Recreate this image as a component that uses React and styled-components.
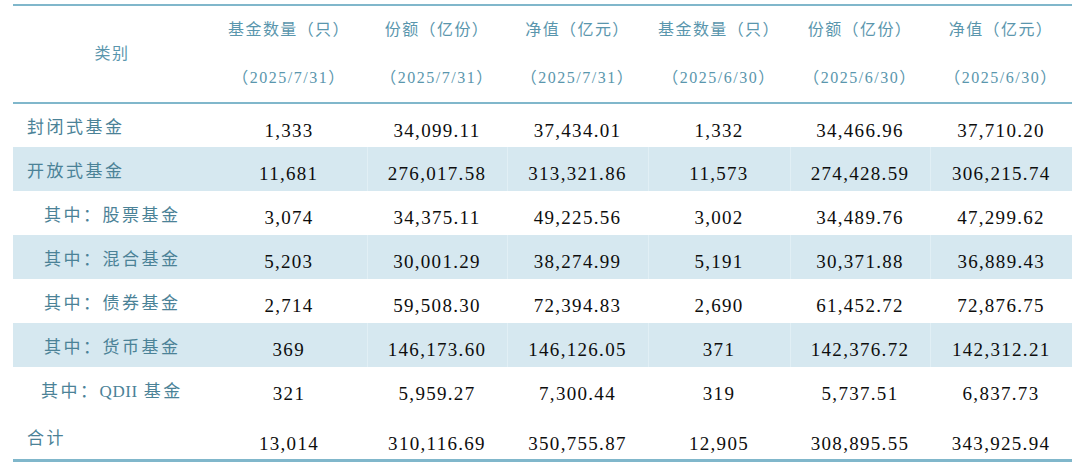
import React from 'react';
import styled, { createGlobalStyle } from 'styled-components';

const Global = createGlobalStyle`
  body {
    margin: 0;
    background: #fff;
  }
`;

const LINE = '#80b7cb';

const Table = styled.table`
  border-collapse: collapse;
  table-layout: fixed;
  width: 1059px;
  margin: 4px 0 0 13px;
  border-top: 2px solid ${LINE};
  border-bottom: 3px solid ${LINE};
`;

const HeadCell = styled.th`
  height: 96px;
  padding: 0;
  font-weight: normal;
  text-align: center;
  vertical-align: middle;
  color: #5a96ad;
  font-family: "Liberation Serif", "Noto Sans CJK SC", serif;
  border-bottom: 2px solid ${LINE};
`;

const HeadTitle = styled.span`
  display: block;
  line-height: 48px;
  font-size: 16px;
  letter-spacing: 1.4px;
`;

const HeadDate = styled.span`
  display: block;
  line-height: 48px;
  font-size: 16px;
  letter-spacing: 1.5px;
`;

const Row = styled.tr`
  height: ${p => (p.$tall ? 49 : 44)}px;
  background: ${p => (p.$shaded ? '#d6e8f0' : 'transparent')};
`;

const Label = styled.td`
  padding: ${p => (p.$tall ? '4px' : '0')} 0 0 ${p => p.$indent}px;
  font-family: "Liberation Serif", "Noto Sans CJK SC", serif;
  font-size: 17px;
  letter-spacing: 2.5px;
  color: #4b8297;
  white-space: nowrap;
  vertical-align: middle;
`;

const Latin = styled.span`
  letter-spacing: 0.6px;
  margin-right: 6px;
`;

const Num = styled.td`
  padding: ${p => (p.$tall ? 18 : 10)}px 0 0;
  text-align: center;
  vertical-align: middle;
  font-family: "Liberation Serif", serif;
  font-size: 19px;
  letter-spacing: 1.3px;
  color: #0d0d0d;
  border-left: ${p => (p.$shaded ? '1px solid #e1eff5' : 'none')};
`;

const widths = [198, 156, 140, 141, 142, 140, 142];

const heads = [
  ['基金数量（只）', '（2025/7/31）'],
  ['份额（亿份）', '（2025/7/31）'],
  ['净值（亿元）', '（2025/7/31）'],
  ['基金数量（只）', '（2025/6/30）'],
  ['份额（亿份）', '（2025/6/30）'],
  ['净值（亿元）', '（2025/6/30）'],
];

const rows = [
  { label: '封闭式基金', indent: 14, values: ['1,333', '34,099.11', '37,434.01', '1,332', '34,466.96', '37,710.20'] },
  { label: '开放式基金', indent: 14, shaded: true, values: ['11,681', '276,017.58', '313,321.86', '11,573', '274,428.59', '306,215.74'] },
  { label: '其中：股票基金', indent: 31, values: ['3,074', '34,375.11', '49,225.56', '3,002', '34,489.76', '47,299.62'] },
  { label: '其中：混合基金', indent: 31, shaded: true, values: ['5,203', '30,001.29', '38,274.99', '5,191', '30,371.88', '36,889.43'] },
  { label: '其中：债券基金', indent: 31, values: ['2,714', '59,508.30', '72,394.83', '2,690', '61,452.72', '72,876.75'] },
  { label: '其中：货币基金', indent: 31, shaded: true, values: ['369', '146,173.60', '146,126.05', '371', '142,376.72', '142,312.21'] },
  { label: ['其中：', 'QDII', '基金'], indent: 28, values: ['321', '5,959.27', '7,300.44', '319', '5,737.51', '6,837.73'] },
  { label: '合计', indent: 14, tall: true, values: ['13,014', '310,116.69', '350,755.87', '12,905', '308,895.55', '343,925.94'] },
];

export default function App() {
  return (
    <>
      <Global />
      <Table>
        <colgroup>
          {widths.map((w, i) => (
            <col key={i} style={{ width: w }} />
          ))}
        </colgroup>
        <thead>
          <tr>
            <HeadCell>
              <HeadTitle>类别</HeadTitle>
            </HeadCell>
            {heads.map(([title, date], i) => (
              <HeadCell key={i}>
                <HeadTitle>{title}</HeadTitle>
                <HeadDate>{date}</HeadDate>
              </HeadCell>
            ))}
          </tr>
        </thead>
        <tbody>
          {rows.map((r, idx) => (
            <Row key={idx} $shaded={r.shaded} $tall={r.tall}>
              <Label $indent={r.indent} $tall={r.tall}>
                {Array.isArray(r.label) ? (
                  <>
                    {r.label[0]}
                    <Latin>{r.label[1]}</Latin>
                    {r.label[2]}
                  </>
                ) : (
                  r.label
                )}
              </Label>
              {r.values.map((v, i) => (
                <Num key={i} $shaded={r.shaded && i > 0} $tall={r.tall}>
                  {v}
                </Num>
              ))}
            </Row>
          ))}
        </tbody>
      </Table>
    </>
  );
}
